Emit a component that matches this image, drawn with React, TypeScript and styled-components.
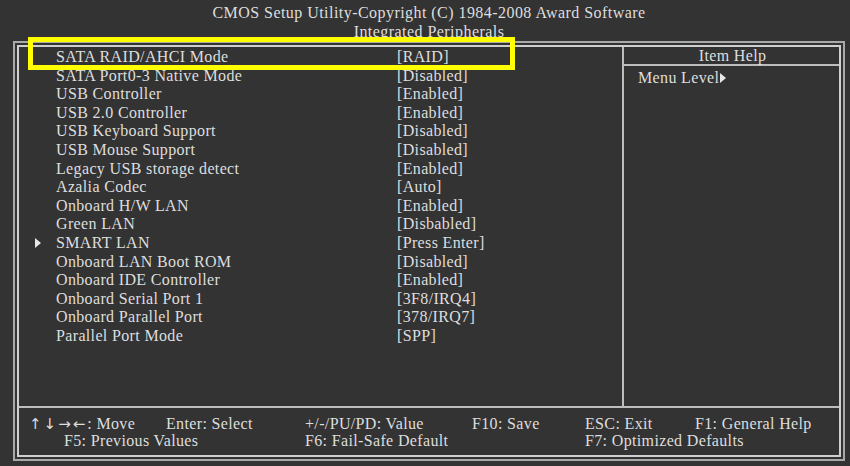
import React from 'react'
import styled, { createGlobalStyle } from 'styled-components'

type Item = {
  label: string
  value: string
  sub?: boolean
}

const items: Item[] = [
  { label: 'SATA RAID/AHCI Mode', value: '[RAID]' },
  { label: 'SATA Port0-3 Native Mode', value: '[Disabled]' },
  { label: 'USB Controller', value: '[Enabled]' },
  { label: 'USB 2.0 Controller', value: '[Enabled]' },
  { label: 'USB Keyboard Support', value: '[Disabled]' },
  { label: 'USB Mouse Support', value: '[Disabled]' },
  { label: 'Legacy USB storage detect', value: '[Enabled]' },
  { label: 'Azalia Codec', value: '[Auto]' },
  { label: 'Onboard H/W LAN', value: '[Enabled]' },
  { label: 'Green LAN', value: '[Disbabled]' },
  { label: 'SMART LAN', value: '[Press Enter]', sub: true },
  { label: 'Onboard LAN Boot ROM', value: '[Disabled]' },
  { label: 'Onboard IDE Controller', value: '[Enabled]' },
  { label: 'Onboard Serial Port 1', value: '[3F8/IRQ4]' },
  { label: 'Onboard Parallel Port', value: '[378/IRQ7]' },
  { label: 'Parallel Port Mode', value: '[SPP]' },
]

const GlobalStyle = createGlobalStyle`
  html, body {
    margin: 0;
    padding: 0;
    background: #333333;
  }
`

const Screen = styled.div`
  position: relative;
  width: 850px;
  height: 466px;
  background: #333333;
  color: #dedede;
  font-family: "Liberation Serif", "DejaVu Serif", serif;
  font-size: 16px;
  letter-spacing: 0.35px;
  overflow: hidden;
`

const Title = styled.div`
  height: 41px;
  padding-top: 3px;
  padding-left: 8px;
  box-sizing: border-box;
  text-align: center;
  line-height: 19px;
  letter-spacing: 0.45px;
`

const OuterFrame = styled.div`
  margin-left: 13px;
  width: 832px;
  height: 420px;
  box-sizing: border-box;
  border: 2px solid #a9a9a9;
  padding: 2px;
`

const InnerFrame = styled.div`
  height: 100%;
  box-sizing: border-box;
  border: 2px solid #cfcfcf;
  display: flex;
  flex-direction: column;
`

const Main = styled.div`
  display: grid;
  grid-template-columns: 605px 1fr;
  height: 359px;
  border-bottom: 2px solid #bdbdbd;
`

const ItemList = styled.div`
  padding-top: 1px;
  border-right: 2px solid #bdbdbd;
`

const Row = styled.div`
  display: flex;
  align-items: center;
  height: 18.6px;
  line-height: 18.6px;
  white-space: nowrap;
`

const Marker = styled.span`
  width: 37px;
  display: flex;
  justify-content: flex-start;
  padding-left: 16px;
  box-sizing: border-box;
`

const Label = styled.span`
  width: 341px;
`

const Value = styled.span``

const HelpPanel = styled.div`
  display: flex;
  flex-direction: column;
`

const HelpHeader = styled.div`
  height: 17px;
  line-height: 18px;
  text-align: center;
  border-bottom: 2px solid #bdbdbd;
  padding-left: 2px;
`

const HelpText = styled.div`
  padding: 3px 0 0 14px;
  line-height: 18px;
  display: flex;
  align-items: center;
  gap: 1px;
`

const Footer = styled.div`
  flex: 1;
  display: grid;
  grid-template-columns: 137px 139px 167px 113px 110px 1fr;
  grid-auto-rows: 17px;
  align-content: center;
  padding-left: 10px;
  padding-top: 1px;
  white-space: nowrap;
  line-height: 17px;
`

const Key = styled.span<{ $span?: number; $indent?: number }>`
  grid-column: span ${(p) => p.$span ?? 1};
  padding-left: ${(p) => p.$indent ?? 0}px;
`

const Arrows = styled.span`
  font-family: "DejaVu Sans", sans-serif;
  font-size: 15px;
  letter-spacing: 2px;
`

const Highlight = styled.div`
  position: absolute;
  left: 28px;
  top: 37px;
  width: 487px;
  height: 33px;
  box-sizing: border-box;
  border: 5px solid #ffff00;
`

function Triangle() {
  return (
    <svg width="6" height="10" viewBox="0 0 6 10">
      <path d="M0 0 L6 5 L0 10 Z" fill="#e8e8e8" />
    </svg>
  )
}

export default function App() {
  return (
    <Screen>
      <GlobalStyle />
      <Title>
        <div>CMOS Setup Utility-Copyright (C) 1984-2008 Award Software</div>
        <div>Integrated Peripherals</div>
      </Title>
      <OuterFrame>
        <InnerFrame>
          <Main>
            <ItemList>
              {items.map((item) => (
                <Row key={item.label}>
                  <Marker>{item.sub && <Triangle />}</Marker>
                  <Label>{item.label}</Label>
                  <Value>{item.value}</Value>
                </Row>
              ))}
            </ItemList>
            <HelpPanel>
              <HelpHeader>Item Help</HelpHeader>
              <HelpText>
                Menu Level
                <Triangle />
              </HelpText>
            </HelpPanel>
          </Main>
          <Footer>
            <Key><Arrows>↑↓→←</Arrows>: Move</Key>
            <Key>Enter: Select</Key>
            <Key>+/-/PU/PD: Value</Key>
            <Key>F10: Save</Key>
            <Key>ESC: Exit</Key>
            <Key>F1: General Help</Key>
            <Key $span={2} $indent={35}>F5: Previous Values</Key>
            <Key $span={2}>F6: Fail-Safe Default</Key>
            <Key $span={2}>F7: Optimized Defaults</Key>
          </Footer>
        </InnerFrame>
      </OuterFrame>
      <Highlight />
    </Screen>
  )
}
